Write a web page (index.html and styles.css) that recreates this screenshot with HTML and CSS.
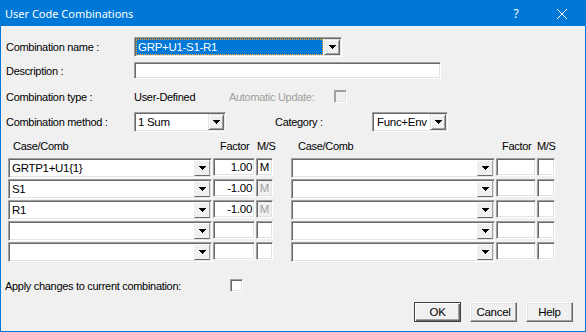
FILE: index.html
```html
<!DOCTYPE html>
<html>
<head>
<meta charset="utf-8">
<link rel="stylesheet" href="styles.css">
</head>
<body>
<div class="window">
  <div class="titlebar">
    <span class="title">User Code Combinations</span>
    <span class="tbtn">?</span>
    <span class="tbtn"><svg width="10" height="10" viewBox="0 0 10 10"><path d="M0 0L10 10M10 0L0 10" stroke="#fff" stroke-width="1"/></svg></span>
  </div>
  <div class="content">
    <div class="row r-name">
      <span class="lbl">Combination name :</span>
      <div class="combo w-name">
        <div class="ctext"><span class="sel">GRP+U1-S1-R1</span></div>
        <div class="cbtn"><svg width="7" height="4" viewBox="0 0 7 4" shape-rendering="crispEdges"><path d="M0 0h7v1H0zM1 1h5v1H1zM2 2h3v1H2zM3 3h1v1H3z"/></svg></div>
      </div>
    </div>
    <div class="row r-desc">
      <span class="lbl">Description :</span>
      <div class="field w-desc"></div>
    </div>
    <div class="row r-type">
      <span class="lbl">Combination type :</span>
      <span class="val">User-Defined</span>
      <span class="dis">Automatic Update:</span>
      <span class="check disabled"></span>
    </div>
    <div class="row r-method">
      <span class="lbl">Combination method :</span>
      <div class="combo w-method">
        <div class="ctext">1 Sum</div>
        <div class="cbtn"><svg width="7" height="4" viewBox="0 0 7 4" shape-rendering="crispEdges"><path d="M0 0h7v1H0zM1 1h5v1H1zM2 2h3v1H2zM3 3h1v1H3z"/></svg></div>
      </div>
      <span class="lbl-cat">Category :</span>
      <div class="combo w-cat">
        <div class="ctext">Func+Env</div>
        <div class="cbtn"><svg width="7" height="4" viewBox="0 0 7 4" shape-rendering="crispEdges"><path d="M0 0h7v1H0zM1 1h5v1H1zM2 2h3v1H2zM3 3h1v1H3z"/></svg></div>
      </div>
    </div>

    <div class="grid">
      <div class="group left">
        <div class="ghead"><span class="h-case">Case/Comb</span><span class="h-fac">Factor</span><span class="h-ms">M/S</span></div>
        <div class="grow">
          <div class="combo gcombo"><div class="ctext">GRTP1+U1{1}</div><div class="cbtn"><svg width="7" height="4" viewBox="0 0 7 4" shape-rendering="crispEdges"><path d="M0 0h7v1H0zM1 1h5v1H1zM2 2h3v1H2zM3 3h1v1H3z"/></svg></div></div>
          <div class="field fac">1.00</div>
          <div class="field ms">M</div>
        </div>
        <div class="grow">
          <div class="combo gcombo"><div class="ctext">S1</div><div class="cbtn"><svg width="7" height="4" viewBox="0 0 7 4" shape-rendering="crispEdges"><path d="M0 0h7v1H0zM1 1h5v1H1zM2 2h3v1H2zM3 3h1v1H3z"/></svg></div></div>
          <div class="field fac">-1.00</div>
          <div class="field ms off">M</div>
        </div>
        <div class="grow">
          <div class="combo gcombo"><div class="ctext">R1</div><div class="cbtn"><svg width="7" height="4" viewBox="0 0 7 4" shape-rendering="crispEdges"><path d="M0 0h7v1H0zM1 1h5v1H1zM2 2h3v1H2zM3 3h1v1H3z"/></svg></div></div>
          <div class="field fac">-1.00</div>
          <div class="field ms off">M</div>
        </div>
        <div class="grow">
          <div class="combo gcombo"><div class="ctext"></div><div class="cbtn"><svg width="7" height="4" viewBox="0 0 7 4" shape-rendering="crispEdges"><path d="M0 0h7v1H0zM1 1h5v1H1zM2 2h3v1H2zM3 3h1v1H3z"/></svg></div></div>
          <div class="field fac"></div>
          <div class="field ms"></div>
        </div>
        <div class="grow">
          <div class="combo gcombo"><div class="ctext"></div><div class="cbtn"><svg width="7" height="4" viewBox="0 0 7 4" shape-rendering="crispEdges"><path d="M0 0h7v1H0zM1 1h5v1H1zM2 2h3v1H2zM3 3h1v1H3z"/></svg></div></div>
          <div class="field fac"></div>
          <div class="field ms"></div>
        </div>
      </div>

      <div class="group right">
        <div class="ghead"><span class="h-case">Case/Comb</span><span class="h-fac">Factor</span><span class="h-ms">M/S</span></div>
        <div class="grow">
          <div class="combo gcombo"><div class="ctext"></div><div class="cbtn"><svg width="7" height="4" viewBox="0 0 7 4" shape-rendering="crispEdges"><path d="M0 0h7v1H0zM1 1h5v1H1zM2 2h3v1H2zM3 3h1v1H3z"/></svg></div></div>
          <div class="field fac"></div>
          <div class="field ms"></div>
        </div>
        <div class="grow">
          <div class="combo gcombo"><div class="ctext"></div><div class="cbtn"><svg width="7" height="4" viewBox="0 0 7 4" shape-rendering="crispEdges"><path d="M0 0h7v1H0zM1 1h5v1H1zM2 2h3v1H2zM3 3h1v1H3z"/></svg></div></div>
          <div class="field fac"></div>
          <div class="field ms"></div>
        </div>
        <div class="grow">
          <div class="combo gcombo"><div class="ctext"></div><div class="cbtn"><svg width="7" height="4" viewBox="0 0 7 4" shape-rendering="crispEdges"><path d="M0 0h7v1H0zM1 1h5v1H1zM2 2h3v1H2zM3 3h1v1H3z"/></svg></div></div>
          <div class="field fac"></div>
          <div class="field ms"></div>
        </div>
        <div class="grow">
          <div class="combo gcombo"><div class="ctext"></div><div class="cbtn"><svg width="7" height="4" viewBox="0 0 7 4" shape-rendering="crispEdges"><path d="M0 0h7v1H0zM1 1h5v1H1zM2 2h3v1H2zM3 3h1v1H3z"/></svg></div></div>
          <div class="field fac"></div>
          <div class="field ms"></div>
        </div>
        <div class="grow">
          <div class="combo gcombo"><div class="ctext"></div><div class="cbtn"><svg width="7" height="4" viewBox="0 0 7 4" shape-rendering="crispEdges"><path d="M0 0h7v1H0zM1 1h5v1H1zM2 2h3v1H2zM3 3h1v1H3z"/></svg></div></div>
          <div class="field fac"></div>
          <div class="field ms"></div>
        </div>
      </div>
    </div>

    <div class="row r-apply">
      <span class="lbl-apply">Apply changes to current combination:</span>
      <span class="check"></span>
    </div>

    <div class="buttons">
      <div class="btn default">OK</div>
      <div class="btn">Cancel</div>
      <div class="btn">Help</div>
    </div>
  </div>
</div>
</body>
</html>
```

FILE: styles.css
```css
html, body {
  margin: 0;
  padding: 0;
  background: #f0f0f0;
}

body {
  font-family: "Liberation Sans", Arial, sans-serif;
  font-size: 11px;
  letter-spacing: -0.3px;
  color: #000;
}

.window {
  width: 586px;
  height: 332px;
  box-sizing: border-box;
  border: 1px solid #0078d7;
  background: #f0f0f0;
  display: flex;
  flex-direction: column;
  overflow: hidden;
}

.titlebar {
  height: 25px;
  flex: none;
  background: #0078d7;
  color: #fff;
  display: flex;
  align-items: center;
  font-family: "Noto Sans", "Open Sans", sans-serif;
  font-size: 11px;
  letter-spacing: 0;
}

.title {
  flex: 1;
  padding-left: 4px;
  padding-bottom: 1px;
}

.tbtn {
  width: 46px;
  height: 25px;
  display: flex;
  align-items: center;
  justify-content: center;
  font-size: 12px;
}

.content {
  padding: 11px 0 0 5px;
  display: flex;
  flex-direction: column;
}

.row {
  display: flex;
  align-items: center;
}

.lbl {
  width: 128px;
  flex: none;
  white-space: nowrap;
}

.r-name { height: 20px; }
.r-desc { height: 17px; margin-top: 5px; }
.r-type { height: 13px; margin-top: 11px; }
.r-method { height: 20px; margin-top: 9px; }

.val {
  width: 95px;
  flex: none;
}

.dis {
  width: 105px;
  flex: none;
  color: #a0a0a0;
}

.lbl-cat {
  width: 97px;
  margin-left: 49px;
  flex: none;
}

/* sunken edit field */
.field {
  box-sizing: border-box;
  background: #fff;
  border: 1px solid;
  border-color: #a0a0a0 #fff #fff #a0a0a0;
  box-shadow: inset 1px 1px #696969, inset -1px -1px #e3e3e3;
}

.w-desc {
  width: 307px;
  height: 17px;
}

/* combo box */
.combo {
  display: flex;
  box-sizing: border-box;
  height: 20px;
  flex: none;
  background: #fff;
  border: 1px solid;
  border-color: #a0a0a0 #fff #fff #a0a0a0;
  box-shadow: inset 1px 1px #696969, inset -1px -1px #e3e3e3;
  padding: 1px;
}

.ctext {
  flex: 1;
  display: flex;
  align-items: center;
  padding-left: 2px;
  white-space: nowrap;
  overflow: hidden;
  font-size: 11.5px;
}

.cbtn {
  width: 16px;
  flex: none;
  box-sizing: border-box;
  background: #f0f0f0;
  border: 1px solid;
  border-color: #e3e3e3 #696969 #696969 #e3e3e3;
  box-shadow: inset 1px 1px #fff, inset -1px -1px #a0a0a0;
  display: flex;
  align-items: center;
  justify-content: center;
}

.cbtn svg {
  display: block;
  fill: #000;
}

.w-name { width: 208px; }
.w-name .ctext { padding-left: 0; padding-right: 1px; }

.sel {
  flex: 1;
  align-self: stretch;
  background: #0078d7;
  color: #fff;
  outline: 1px dotted #f5a623;
  outline-offset: -1px;
  display: flex;
  align-items: center;
  padding-left: 2px;
}

.w-method { width: 92px; }
.w-cat { width: 76px; }
.w-cat .ctext { padding-left: 3px; }

/* checkbox */
.check {
  width: 13px;
  height: 13px;
  box-sizing: border-box;
  flex: none;
  background: #fff;
  border: 1px solid;
  border-color: #a0a0a0 #fff #fff #a0a0a0;
  box-shadow: inset 1px 1px #696969, inset -1px -1px #e3e3e3;
}

.check.disabled {
  background: #f0f0f0;
  box-shadow: inset 1px 1px #a0a0a0, inset -1px -1px #e3e3e3;
}

/* grid */
.grid {
  display: flex;
  margin-left: 2px;
  margin-top: 7px;
  gap: 18px;
}

.group {
  display: flex;
  flex-direction: column;
  gap: 1px;
  width: 265px;
  flex: none;
}

.ghead {
  display: flex;
  height: 13px;
  align-items: center;
  margin-bottom: 5px;
  white-space: nowrap;
}

.ghead span {
  box-sizing: border-box;
  flex: none;
}

.left .h-case { width: 212px; padding-left: 5px; }
.left .h-fac { width: 37px; }
.left .h-ms { width: 16px; }
.right .h-case { width: 211px; padding-left: 7px; }
.right .h-fac { width: 35px; }
.right .h-ms { width: 19px; }

.grow {
  display: flex;
  align-items: flex-start;
  gap: 1px;
  height: 20px;
}

.gcombo { width: 204px; }
.gcombo .cbtn {
  border-color: #fff #a0a0a0 #696969 #f0f0f0;
  box-shadow: none;
}

.fac, .ms {
  height: 18px;
  flex: none;
  line-height: 16px;
  font-size: 11.5px;
}

.fac {
  text-align: right;
  padding-right: 2px;
}

.ms {
  text-align: center;
}

.left .fac { width: 42px; }
.left .ms { width: 17px; }
.right .fac { width: 40px; }
.right .ms { width: 18px; }

.ms.off {
  background: #f0f0f0;
  color: #a0a0a0;
}

/* apply */
.r-apply {
  height: 13px;
  margin-top: 17px;
}

.lbl-apply {
  width: 225px;
  margin-left: -1px;
  flex: none;
  white-space: nowrap;
}

/* buttons */
.buttons {
  display: flex;
  justify-content: flex-end;
  gap: 9px;
  margin-top: 10px;
  margin-right: 12px;
}

.btn {
  width: 47px;
  height: 20px;
  box-sizing: border-box;
  display: flex;
  align-items: center;
  justify-content: center;
  background: #f0f0f0;
  border: 1px solid;
  border-color: #fff #696969 #696969 #fff;
  box-shadow: inset -1px -1px #a0a0a0, inset 1px 1px #e3e3e3;
  font-size: 11.5px;
}

.btn.default {
  border-color: #404040;
  box-shadow: inset 1px 1px #fff, inset -1px -1px #696969, inset -2px -2px #a0a0a0;
}
```
